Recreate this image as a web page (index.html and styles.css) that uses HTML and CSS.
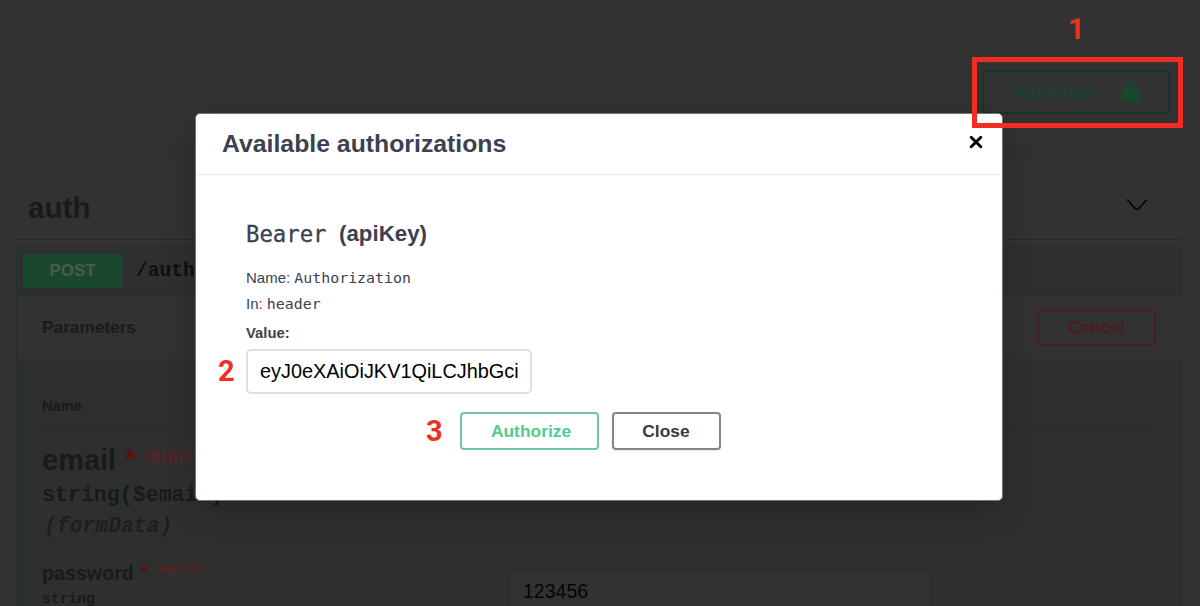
FILE: index.html
```html
<!DOCTYPE html>
<html lang="en">
<head>
<meta charset="utf-8">
<title>Available authorizations</title>
<link rel="stylesheet" href="styles.css">
</head>
<body>
<main class="page">
  <header class="scheme">
    <button class="btn btn-lock"><span>Authorize</span>
      <svg class="lock" viewBox="0 0 20 24" width="20" height="24"><path d="M6.300 5.800V5.200A3.700 3.700 0 0 1 13.700 5.200V10" fill="none" stroke="#17492d" stroke-width="2.200"/><rect x="1" y="9" width="18" height="13.600" rx="2.500" fill="#17492d"/></svg>
    </button>
  </header>
  <section class="tag">
    <div class="tag-head"><h2>auth</h2>
      <svg width="24" height="16" viewBox="0 0 24 16"><path d="M2 2.500L10.300 11.600Q12 13.200 13.700 11.600L22 2.500" fill="none" stroke="#080808" stroke-width="1.800"/></svg>
    </div>
    <div class="operation">
      <div class="summary"><span class="method">POST</span><code class="path">/auth</code></div>
      <div class="params-head"><span>Parameters</span><button class="btn btn-cancel">Cancel</button></div>
      <div class="params">
        <div class="col-head">Name</div>
        <div class="param param-email">
          <div class="param-name">email <b>*</b><i>required</i></div>
          <div class="param-type">string($email)</div>
          <div class="param-in">(formData)</div>
        </div>
        <div class="param param-password">
          <div>
            <div class="param-name">password <b>*</b><i>required</i></div>
            <div class="param-type">string</div>
          </div>
          <div class="field">123456</div>
        </div>
      </div>
    </div>
  </section>
</main>
<div class="modal">
  <div class="modal-head"><h3>Available authorizations</h3>
    <svg width="14" height="14" viewBox="0 0 14 14"><path d="M2.200 2.200L11.800 11.800M11.800 2.200L2.200 11.800" stroke="#000" stroke-width="2.900" stroke-linecap="round"/></svg>
  </div>
  <div class="modal-body">
    <h4><code>Bearer</code><span>(apiKey)</span></h4>
    <p>Name: <code>Authorization</code></p>
    <p>In: <code>header</code></p>
    <label>Value:</label>
    <div class="token">eyJ0eXAiOiJKV1QiLCJhbGci</div>
    <div class="actions"><button class="btn btn-authorize">Authorize</button><button class="btn btn-close">Close</button></div>
  </div>
</div>
<div class="highlight"></div>
<span class="step step-1">1</span>
<span class="step step-2">2</span>
<span class="step step-3">3</span>
</body>
</html>
```
FILE: styles.css
```css
* { box-sizing: border-box; }
body { margin: 0; height: 606px; overflow: hidden; position: relative; background: #323232; font-family: "Liberation Sans", Arial, sans-serif; }
h2, h3, h4, p { margin: 0; }
.page { height: 606px; overflow: hidden; white-space: nowrap; color: #181a1d; }
.btn { font: bold 17.4px/20px "Liberation Sans", Arial, sans-serif; background: transparent; border: 2px solid; border-radius: 4px; padding: 0; white-space: nowrap; }
.scheme { height: 153px; border-bottom: 2px solid #2c2c2c; padding: 70px 30px 0 0; display: flex; justify-content: flex-end; align-items: flex-start; }
.btn-lock { width: 188px; height: 44px; border-color: #183328; color: #17432c; display: flex; align-items: center; justify-content: space-between; padding: 0 28px 0 29px; }
.lock { margin-top: -2px; }
.tag { padding: 0 18px 0 16px; }
.tag-head { height: 87px; border-bottom: 1px solid #282828; display: flex; align-items: center; justify-content: space-between; padding: 23px 33px 0 12px; }
.tag-head svg { margin-top: -6px; }
h2 { font-size: 29.6px; line-height: 34px; }
.operation { margin-top: 6px; border: 1px solid #1e322a; border-radius: 4px; height: 500px; background: #2e302f; }
.summary { height: 49px; border-bottom: 1px solid #1e322a; display: flex; align-items: center; padding: 0 6px; }
.method { width: 99px; height: 34px; border-radius: 3px; background: #19482e; color: #4b5a51; font-weight: bold; font-size: 17px; line-height: 34px; text-align: center; }
.path { margin-left: 14px; font: bold 19.6px/24px "Liberation Mono", monospace; color: #0e1010; }
.params-head { height: 62px; background: #323232; display: flex; align-items: center; justify-content: space-between; padding: 0 25px; font-size: 17.3px; font-weight: bold; }
.btn-cancel { width: 119px; height: 37px; border-color: #481f25; color: #50191f; }
.params { padding: 0 25px; }
.col-head { height: 73px; border-bottom: 1px solid #282a29; font-size: 14.7px; font-weight: bold; line-height: 17px; padding-top: 40px; }
.param-name { font-weight: bold; }
.param-name b { color: #650b0b; }
.param-name i { color: #641f22; font-style: normal; font-weight: normal; }
.param-email { height: 131px; padding-top: 12px; }
.param-email .param-name { font-size: 29px; line-height: 34px; display: flex; }
.param-email b { margin-left: 9px; font-size: 28px; line-height: 32px; }
.param-email i { font-size: 19.8px; line-height: 24px; margin-left: 7px; }
.param-type { font: bold 21.6px/28px "Liberation Mono", monospace; }
.param-email .param-type { margin-top: 4px; }
.param-in { font: italic bold 21.4px/30px "Liberation Mono", monospace; padding: 2px 0 0 2px; }
.param-email .param-in { color: #1d1f1f; }
.param-password { display: grid; grid-template-columns: 467px 422px; padding-top: 8px; }
.param-password .param-name { font-size: 19.7px; line-height: 24px; display: flex; margin-top: -9px; }
.param-password .param-type { font-size: 14.7px; line-height: 18px; margin-top: 5px; }
.param-password b { font-size: 18px; margin-left: 7px; line-height: 22px; }
.param-password i { font-size: 13.6px; line-height: 13px; margin-left: 6px; letter-spacing: -.1px; }
.field { height: 43px; border: 1px solid #2a2c2b; border-radius: 4px; background: #323232; padding-left: 13px; font-size: 19.5px; line-height: 41px; color: #050505; }
.modal { position: absolute; left: 195px; top: 113px; width: 808px; height: 388px; background: #fff; border: 1px solid #747474; border-radius: 5px; box-shadow: 0 10px 30px rgba(0, 0, 0, .2); color: #3b4151; white-space: nowrap; }
.modal-head { height: 61px; border-bottom: 1px solid #e9eaea; display: flex; align-items: center; justify-content: space-between; padding: 0 19px 0 26px; }
.modal-head svg { margin-top: -5px; }
h3 { font-size: 24.8px; line-height: 30px; }
.modal-body { padding: 42px 50px 0 50px; }
code { font-family: "DejaVu Sans Mono", monospace; font-weight: normal; }
h4 { height: 34px; line-height: 34px; font-size: 22.3px; display: flex; }
h4 code { width: 93px; -webkit-text-stroke: .3px #3b4151; }
.modal-body p { font-size: 15px; line-height: 26px; height: 26px; }
.modal-body h4 + p { margin-top: 14px; }
.modal-body p code { font-size: 14.9px; }
label { display: block; font-size: 14.8px; line-height: 20px; font-weight: bold; margin-top: 6px; }
.token { width: 286px; height: 45px; margin-top: 6px; border: 2px solid #e0e0e0; border-radius: 5px; color: #000; font-size: 19.9px; line-height: 41px; padding-left: 12px; }
.actions { display: flex; gap: 13px; justify-content: center; margin-top: 18px; padding-right: 18px; }
.btn-authorize { width: 139px; height: 38px; border-color: #6fc6a0; color: #50cb92; padding-left: 4px; }
.btn-close { width: 109px; height: 38px; border-color: #858585; color: #353b4b; box-shadow: 0 1px 2px rgba(0, 0, 0, .1); }
.highlight { position: absolute; left: 972px; top: 57px; width: 211px; height: 71px; border: 5px solid #f02d22; }
.step { position: absolute; color: #ed3024; font: bold 29px/34px Roboto, sans-serif; }
.step-1 { left: 1068px; top: 12px; }
.step-2 { left: 218px; top: 354px; }
.step-3 { left: 426px; top: 414px; }
```
